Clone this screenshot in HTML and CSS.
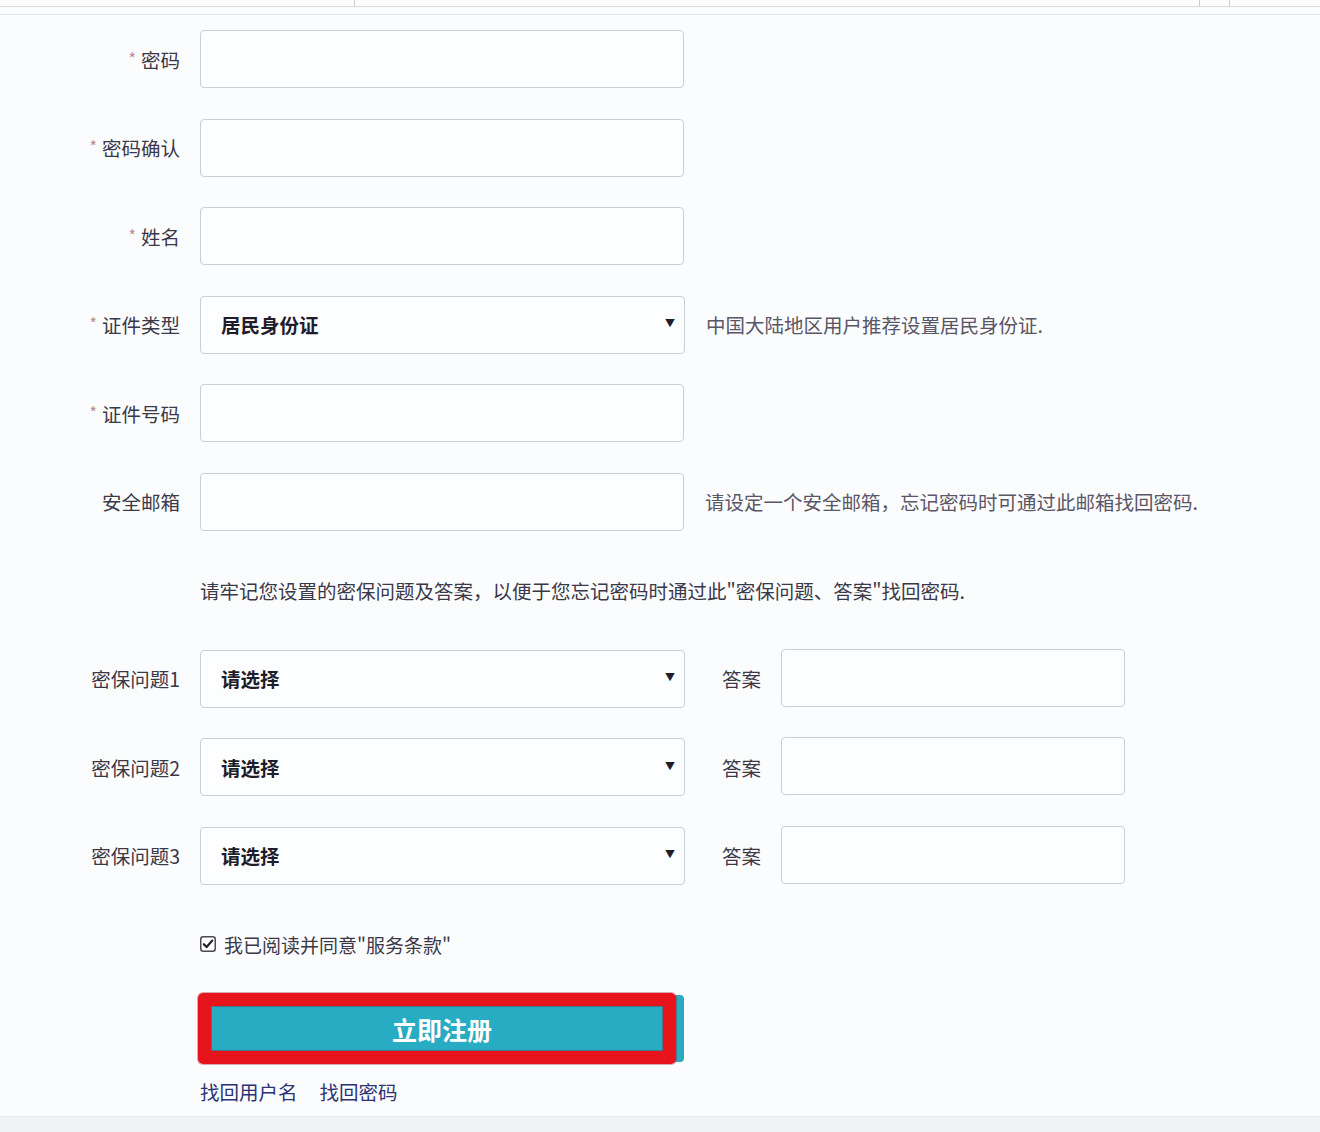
FILE: index.html
```html
<!DOCTYPE html>
<html lang="zh-CN">
<head>
<meta charset="utf-8">
<title>注册</title>
<link rel="stylesheet" href="styles.css">
</head>
<body>
<div class="topbar">
  <span class="tb-a"></span><span class="tb-b"></span><span class="tb-c"></span>
</div>
<div class="topline"></div>

<main class="form">
  <div class="row">
    <label class="label"><span class="req">*</span>密码</label>
    <div class="field"></div>
  </div>
  <div class="row">
    <label class="label"><span class="req">*</span>密码确认</label>
    <div class="field"></div>
  </div>
  <div class="row">
    <label class="label"><span class="req">*</span>姓名</label>
    <div class="field"></div>
  </div>
  <div class="row">
    <label class="label"><span class="req">*</span>证件类型</label>
    <div class="field select"><span class="sel-text">居民身份证</span><span class="arrow">▼</span></div>
    <p class="hint">中国大陆地区用户推荐设置居民身份证.</p>
  </div>
  <div class="row">
    <label class="label"><span class="req">*</span>证件号码</label>
    <div class="field"></div>
  </div>
  <div class="row">
    <label class="label">安全邮箱</label>
    <div class="field"></div>
    <p class="hint">请设定一个安全邮箱，忘记密码时可通过此邮箱找回密码.</p>
  </div>
  <div class="row">
    <span class="label"></span>
    <p class="note">请牢记您设置的密保问题及答案，以便于您忘记密码时通过此"密保问题、答案"找回密码.</p>
  </div>
  <div class="row">
    <label class="label">密保问题1</label>
    <div class="field select"><span class="sel-text">请选择</span><span class="arrow">▼</span></div>
    <div class="answer"><span class="ans-label">答案</span><div class="field ans-field"></div></div>
  </div>
  <div class="row">
    <label class="label">密保问题2</label>
    <div class="field select"><span class="sel-text">请选择</span><span class="arrow">▼</span></div>
    <div class="answer"><span class="ans-label">答案</span><div class="field ans-field"></div></div>
  </div>
  <div class="row">
    <label class="label">密保问题3</label>
    <div class="field select"><span class="sel-text">请选择</span><span class="arrow">▼</span></div>
    <div class="answer"><span class="ans-label">答案</span><div class="field ans-field"></div></div>
  </div>

  <div class="actions">
    <div class="agree">
      <span class="check"><svg viewBox="0 0 16 16" width="16" height="16"><rect x="0.75" y="0.75" width="14.5" height="14.5" rx="2.5" fill="#fff" stroke="#4a4a55" stroke-width="1.5"/><path d="M3.8 8.2 L6.6 11 L12.2 4.6" fill="none" stroke="#1e1e28" stroke-width="2.2" stroke-linecap="round" stroke-linejoin="round"/></svg></span>
      <span class="agree-text">我已阅读并同意"服务条款"</span>
    </div>
    <div class="submit">
      <button class="btn" type="button">立即注册</button>
      <span class="highlight"></span>
    </div>
    <div class="links">
      <a class="link">找回用户名</a>
      <a class="link">找回密码</a>
    </div>
  </div>
</main>

<div class="bottom"></div>
</body>
</html>
```

FILE: styles.css
```css
* { box-sizing: border-box; }

html, body {
  margin: 0;
  padding: 0;
}

body {
  background: #fbfcfe;
  font-family: "Noto Sans CJK SC", "Noto Sans", "Liberation Sans", sans-serif;
  color: #3a3748;
  width: 1320px;
  height: 1132px;
  overflow: hidden;
}

.topbar {
  height: 7px;
  background: #fdfdfe;
  border-bottom: 1px solid #d9dbe0;
  display: flex;
}
.tb-a { width: 355px; border-right: 1px solid #c9cbd0; }
.tb-b { width: 845px; border-right: 1px solid #c9cbd0; }
.tb-c { width: 30px; border-right: 1px solid #c9cbd0; }

.topline {
  margin-top: 7px;
  height: 1px;
  background: #e3e5ea;
}

.form {
  padding-top: 15px;
  display: flex;
  flex-direction: column;
  gap: 30.5px;
}

.row {
  display: flex;
  align-items: center;
  height: 58px;
}

.label {
  width: 180px;
  text-align: right;
  font-size: 19.5px;
  color: #3b3848;
  flex: none;
  white-space: nowrap;
}

.req {
  color: #b98a92;
  font-size: 16px;
  margin-right: 5px;
  position: relative;
  top: -3px;
}

.field {
  margin-left: 20px;
  width: 484px;
  height: 58px;
  border: 1px solid #c8cfd6;
  border-radius: 4px;
  background: #fdfeff;
  flex: none;
}

.select {
  width: 485px;
  display: flex;
  align-items: center;
  justify-content: space-between;
  padding: 0 9px 0 20px;
}

.sel-text {
  font-size: 19.5px;
  font-weight: 700;
  color: #1f1d2a;
}

.arrow {
  font-size: 10px;
  color: #1f1d2a;
  position: relative;
  top: -2px;
}

.hint {
  margin: 0 0 0 21px;
  font-size: 19.5px;
  color: #5a5666;
  white-space: nowrap;
}

.note {
  margin: 0 0 0 20px;
  font-size: 19.5px;
  color: #3b3848;
  white-space: nowrap;
}

.answer {
  display: flex;
  align-items: center;
  margin-left: 37px;
}

.ans-label {
  font-size: 19.5px;
  color: #3b3848;
  width: 40px;
}

.ans-field {
  margin-left: 19px;
  width: 344px;
  position: relative;
  top: -1px;
}

.actions {
  padding-left: 200px;
  display: flex;
  flex-direction: column;
}

.agree {
  height: 58px;
  display: flex;
  align-items: center;
  gap: 8px;
}

.check { display: flex; }

.agree-text {
  font-size: 19px;
  color: #3b3848;
}

.submit {
  position: relative;
  margin-top: 22px;
  width: 484px;
  height: 67px;
}

.btn {
  width: 484px;
  height: 67px;
  border: none;
  border-radius: 4px;
  background: #27acc3;
  color: #ffffff;
  font-family: "Noto Sans CJK SC", "Noto Sans", sans-serif;
  font-size: 25px;
  font-weight: 700;
  letter-spacing: 0;
  padding: 0;
}

.highlight {
  position: absolute;
  left: -2px;
  top: -2px;
  width: 478px;
  height: 71px;
  border: 13px solid #e8141c;
  border-radius: 5px;
  box-shadow: inset 0 0 0 1px rgba(120, 20, 30, 0.35), 0 0 0 1px rgba(150, 20, 30, 0.35);
  pointer-events: none;
}

.links {
  margin-top: 14px;
  display: flex;
  gap: 22px;
  height: 30px;
  align-items: center;
}

.link {
  font-size: 19.5px;
  color: #2b3375;
  text-decoration: none;
}

.bottom {
  margin-top: 10px;
  height: 30px;
  background: #f1f2f4;
  border-top: 1px solid #e6e8ec;
}
```
